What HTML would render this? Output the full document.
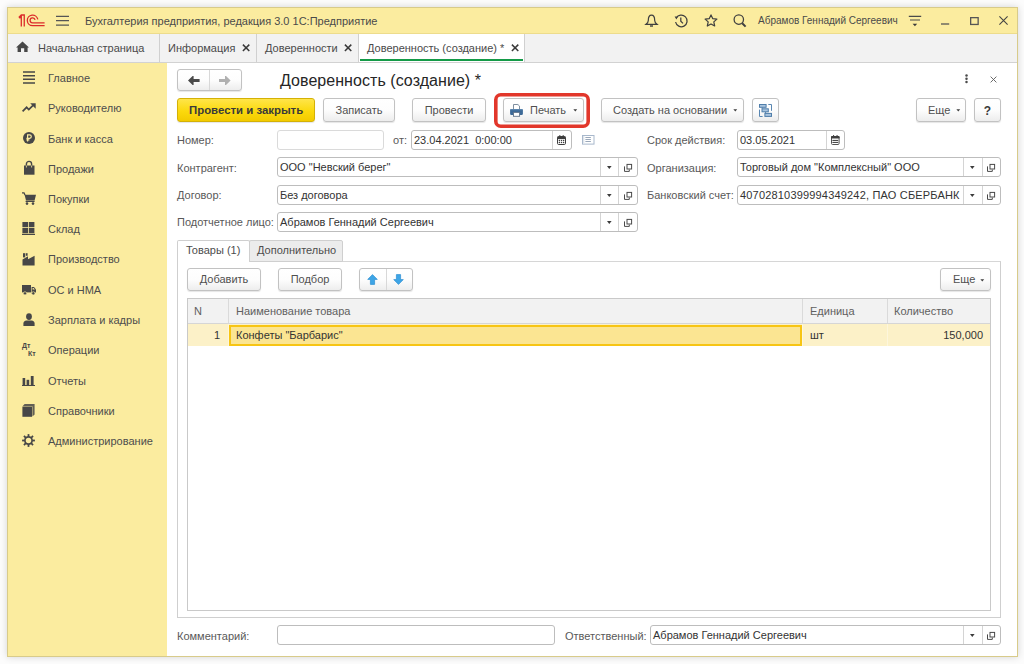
<!DOCTYPE html><html><head><meta charset="utf-8"><style>
*{box-sizing:border-box;margin:0;padding:0}
html,body{width:1024px;height:664px;overflow:hidden;background:#fcfcfc;font-family:"Liberation Sans",sans-serif;font-size:11px;color:#4d4d4d}
.a{position:absolute;white-space:nowrap}
.t{line-height:14px;height:14px}
svg{position:absolute;overflow:visible}
#win{position:absolute;left:7px;top:7px;width:1011px;height:650px;border:1px solid #d8cb8a;background:#fff;box-shadow:0 0 7px rgba(0,0,0,.16)}
#hdr{position:absolute;left:8px;top:8px;width:1009px;height:26px;background:#fbec9f;border-bottom:1px solid #eddc8c}
#tabs{position:absolute;left:8px;top:34px;width:1009px;height:29px;background:#f2f2f2;border-bottom:1px solid #d2d2d2}
#side{position:absolute;left:8px;top:63px;width:159px;height:593px;background:#fbec9f}
.btn{position:absolute;height:24px;border:1px solid #c2c2c2;border-radius:3px;background:linear-gradient(#ffffff,#fdfdfd 50%,#ededed);box-shadow:0 1px 1px rgba(0,0,0,.10);color:#505050;line-height:22px;white-space:nowrap}
.fld{position:absolute;height:20px;border:1px solid #bdbdbd;border-radius:3px;background:#fff;color:#333;line-height:18px;padding-left:2px;white-space:nowrap;overflow:hidden}
.dv{position:absolute;top:0;bottom:0;width:1px;background:#d4d4d4}
.tri{position:absolute;width:0;height:0;border-left:3px solid transparent;border-right:3px solid transparent;border-top:3px solid #444}
.lbl{color:#595959}
</style></head><body>
<div id="win"></div><div id="hdr"></div><div id="tabs"></div><div id="side"></div>
<svg style="left:18px;top:13px" width="28" height="15" viewBox="0 0 28 15">
<g fill="none" stroke="#dc2b2b" stroke-width="1.3" stroke-linejoin="miter">
<path d="M6.25 13.5 V2.0 H3.3 L1.2 4.1 L1.9 4.9 L3.3 3.7 V13.5"/>
<path d="M19.82 6.48 A5.3 5.3 0 1 0 14.6 12.7 H26.6"/>
<path d="M17.06 6.97 A2.5 2.5 0 1 0 14.6 9.9 H26.6"/>
</g></svg>
<svg style="left:56px;top:15px" width="13" height="11" viewBox="0 0 13 11"><g stroke="#555" stroke-width="1.3"><path d="M0 1.3H13M0 5.7H13M0 10.2H13"/></g></svg>
<div class="a t" style="left:85px;top:14px;color:#4a4a4a;">Бухгалтерия предприятия, редакция 3.0 1С:Предприятие</div>
<svg style="left:645px;top:14px" width="13" height="13" viewBox="0 0 13 13"><g fill="none" stroke="#3f3f3f" stroke-width="1.2">
<path d="M6.5 1.2 C3.8 1.2 3.3 4 3.3 6.5 C3.3 8.3 2.3 9.3 1 10.3 H12 C10.7 9.3 9.7 8.3 9.7 6.5 C9.7 4 9.2 1.2 6.5 1.2Z"/></g>
<rect x="5" y="11.3" width="3" height="1.4" fill="#3f3f3f"/></svg>
<svg style="left:674px;top:14px" width="14" height="14" viewBox="0 0 14 14"><g fill="none" stroke="#3f3f3f" stroke-width="1.25">
<path d="M2.2 4.2 A5.8 5.8 0 1 1 1.6 8"/><path d="M6.8 3.6 V7.2 L9 9.4"/></g>
<path d="M0.6 2.4 L3.8 2.6 L2.4 5.4Z" fill="#3f3f3f"/></svg>
<svg style="left:704px;top:14px" width="14" height="13" viewBox="0 0 14 13"><path fill="none" stroke="#3f3f3f" stroke-width="1.2" stroke-linejoin="round" d="M7 0.9 L8.8 4.7 L12.9 5.1 L9.8 7.9 L10.7 12 L7 9.9 L3.3 12 L4.2 7.9 L1.1 5.1 L5.2 4.7Z"/></svg>
<svg style="left:733px;top:14px" width="14" height="14" viewBox="0 0 14 14"><circle cx="5.8" cy="5.6" r="4.7" fill="none" stroke="#3f3f3f" stroke-width="1.25"/><path d="M9.2 9.2 L12.6 12.6" stroke="#3f3f3f" stroke-width="2"/></svg>
<div class="a t" style="left:758px;top:15px;color:#4a4a4a;font-size:10px;line-height:12px;height:auto;">Абрамов Геннадий Сергеевич</div>
<svg style="left:908px;top:15px" width="14" height="12" viewBox="0 0 14 12"><g stroke="#4a4a4a" stroke-width="1.2"><path d="M0.8 1.4H13.2M2 5H12"/></g><path d="M4.6 8.8H9.2L6.9 11.3Z" fill="#3a3a3a"/></svg>
<svg style="left:941px;top:23px" width="9" height="2" viewBox="0 0 9 2"><path d="M0 1H8.2" stroke="#555" stroke-width="1.3"/></svg>
<svg style="left:970px;top:17px" width="9" height="8" viewBox="0 0 9 8"><rect x="0.65" y="0.65" width="7.5" height="6.8" fill="none" stroke="#555" stroke-width="1.3"/></svg>
<svg style="left:999px;top:16px" width="9" height="9" viewBox="0 0 9 9"><path d="M0.4 0.4L8.6 8.6M8.6 0.4L0.4 8.6" stroke="#444" stroke-width="1.1"/></svg>
<svg style="left:16px;top:41px" width="14" height="11" viewBox="0 0 14 11"><path fill="#474747" d="M6.5 0.6 L13 6.6 H11.6 V11 H8.2 V7.2 H5 V11 H1.6 V6.6 H0 Z"/></svg>
<div class="a t" style="left:38px;top:41px;color:#4a4a4a;">Начальная страница</div>
<div class="a" style="left:159px;top:34px;width:1px;height:28px;background:#d0d0d0"></div>
<div class="a t" style="left:168px;top:41px;color:#4a4a4a;">Информация</div>
<svg style="left:242px;top:44px" width="8" height="8" viewBox="0 0 8 8"><path d="M0.9 0.6 L7.3 7 M7.3 0.6 L0.9 7" stroke="#3a3a3a" stroke-width="1.5"/></svg>
<div class="a" style="left:256px;top:34px;width:1px;height:28px;background:#d0d0d0"></div>
<div class="a t" style="left:265px;top:41px;color:#4a4a4a;">Доверенности</div>
<svg style="left:344px;top:44px" width="8" height="8" viewBox="0 0 8 8"><path d="M0.9 0.6 L7.3 7 M7.3 0.6 L0.9 7" stroke="#3a3a3a" stroke-width="1.5"/></svg>
<div class="a" style="left:358px;top:34px;width:167px;height:28px;background:#fff;border-left:1px solid #d0d0d0;border-right:1px solid #d0d0d0"></div>
<div class="a t" style="left:367px;top:41px;color:#4a4a4a;">Доверенность (создание) *</div>
<svg style="left:511px;top:44px" width="8" height="8" viewBox="0 0 8 8"><path d="M0.9 0.6 L7.3 7 M7.3 0.6 L0.9 7" stroke="#3a3a3a" stroke-width="1.5"/></svg>
<div class="a" style="left:360px;top:59px;width:163px;height:2px;background:#149a47"></div>
<div class="a t" style="left:48px;top:71px;color:#4d4d4d;">Главное</div>
<div class="a t" style="left:48px;top:101px;color:#4d4d4d;">Руководителю</div>
<div class="a t" style="left:48px;top:132px;color:#4d4d4d;">Банк и касса</div>
<div class="a t" style="left:48px;top:162px;color:#4d4d4d;">Продажи</div>
<div class="a t" style="left:48px;top:192px;color:#4d4d4d;">Покупки</div>
<div class="a t" style="left:48px;top:222px;color:#4d4d4d;">Склад</div>
<div class="a t" style="left:48px;top:252px;color:#4d4d4d;">Производство</div>
<div class="a t" style="left:48px;top:283px;color:#4d4d4d;">ОС и НМА</div>
<div class="a t" style="left:48px;top:313px;color:#4d4d4d;">Зарплата и кадры</div>
<div class="a t" style="left:48px;top:343px;color:#4d4d4d;">Операции</div>
<div class="a t" style="left:48px;top:374px;color:#4d4d4d;">Отчеты</div>
<div class="a t" style="left:48px;top:404px;color:#4d4d4d;">Справочники</div>
<div class="a t" style="left:48px;top:434px;color:#4d4d4d;">Администрирование</div>
<div class="btn" style="left:177px;top:69px;width:65px;height:22px"></div>
<div class="a" style="left:209px;top:70px;width:1px;height:20px;background:#d8d8d8"></div>
<svg style="left:188px;top:76px" width="12" height="9" viewBox="0 0 12 9"><path fill="#4a4a4a" d="M0 4.5 L4.6 0 H5.6 V3 H11.6 V6 H5.6 V9 H4.6Z"/></svg>
<svg style="left:219px;top:76px" width="12" height="9" viewBox="0 0 12 9"><path fill="#b0b0b0" d="M11.6 4.5 L7 0 H6 V3 H0 V6 H6 V9 H7Z"/></svg>
<div class="a t" style="left:280px;top:71px;color:#262626;font-size:16px;line-height:20px;height:auto;line-height:20px;letter-spacing:0.05px">Доверенность (создание) *</div>
<svg style="left:965px;top:74px" width="3" height="10" viewBox="0 0 3 10"><g fill="#4a4a4a"><circle cx="1.5" cy="1.4" r="1.25"/><circle cx="1.5" cy="4.7" r="1.25"/><circle cx="1.5" cy="8" r="1.25"/></g></svg>
<svg style="left:990px;top:76px" width="7" height="7" viewBox="0 0 7 7"><path d="M0.6 0.6L6.4 6.4M6.4 0.6L0.6 6.4" stroke="#5a5a5a" stroke-width="0.9"/></svg>
<div class="btn" style="left:177px;top:98px;width:138px;background:linear-gradient(#ffe54a,#fbd90d 55%,#f3cb00);border-color:#d4b106;color:#3a3a3a;font-weight:bold;font-size:11.4px;padding-left:11px">Провести и закрыть</div>
<div class="btn" style="left:323px;top:98px;width:72px;text-align:center">Записать</div>
<div class="btn" style="left:412px;top:98px;width:74px;text-align:center">Провести</div>
<svg style="left:494px;top:93px" width="96" height="35" viewBox="0 0 96 35"><rect x="1.8" y="1.8" width="92.4" height="31.4" rx="5" fill="none" stroke="#e2372b" stroke-width="3.6"/></svg>
<div class="btn" style="left:503px;top:98px;width:81px;padding-left:26px">Печать</div>
<svg style="left:510px;top:104px" width="13" height="13" viewBox="0 0 13 13">
<path fill="#fff" stroke="#6f8194" stroke-width="0.9" d="M3.5 5.2 V0.5 H7.9 L9.5 2.1 V5.2"/><path d="M7.9 0.5 V2.1 H9.5Z" fill="#b5c3d1"/>
<rect x="0.1" y="4.9" width="12.8" height="6" rx="1.2" fill="#3d6a98"/><rect x="0.6" y="5.2" width="11.8" height="1" fill="#5f8ab4"/>
<rect x="3.5" y="8.4" width="6.1" height="3.9" fill="#fff" stroke="#61748a" stroke-width="0.9"/></svg>
<svg style="left:573px;top:109px" width="5" height="3" viewBox="0 0 5 3"><path d="M0.4 0.2 H4.2 L2.3 2.5Z" fill="#3c3c3c"/></svg>
<div class="btn" style="left:601px;top:98px;width:143px;padding-left:11px">Создать на основании</div>
<svg style="left:733px;top:109px" width="5" height="3" viewBox="0 0 5 3"><path d="M0.4 0.2 H4.2 L2.3 2.5Z" fill="#3c3c3c"/></svg>
<div class="btn" style="left:752px;top:98px;width:27px"></div>
<svg style="left:759px;top:104px" width="13" height="13" viewBox="0 0 13 13">
<g fill="none" stroke="#5a87b2" stroke-width="1"><path d="M9.3 0.5 H12.5 V6.8 M0.5 5.6 V12.5 H3.6 M3.3 3.3 V4.8 M6.6 7.8 V9.4"/></g>
<g fill="#a9c4de" stroke="#4f7eaa" stroke-width="1"><rect x="0.5" y="0.5" width="6.6" height="2.8"/><rect x="3" y="4.8" width="6.3" height="3"/><rect x="5.9" y="9.4" width="6.6" height="3"/></g></svg>
<div class="btn" style="left:916px;top:98px;width:50px;padding-left:11px">Еще</div>
<svg style="left:956px;top:109px" width="5" height="3" viewBox="0 0 5 3"><path d="M0.4 0.2 H4.2 L2.3 2.5Z" fill="#3c3c3c"/></svg>
<div class="btn" style="left:974px;top:98px;width:27px;text-align:center;font-weight:bold;color:#3a3a3a;font-size:12px;line-height:24px">?</div>
<div class="a t" style="left:177px;top:133px;color:#595959;">Номер:</div>
<div class="fld" style="left:277px;top:130px;width:107px;border-color:#dadada"></div>
<div class="a t" style="left:393px;top:133px;color:#595959;">от:</div>
<div class="fld" style="left:411px;top:130px;width:161px;border-color:#bdbdbd">23.04.2021&nbsp; 0:00:00<div class="dv" style="left:140px"></div><svg style="left:145px;top:4px" width="9" height="10" viewBox="0 0 9 10"><rect x="0.5" y="1.5" width="8" height="8" rx="1.2" fill="#fff" stroke="#3e3e3e" stroke-width="1"/><rect x="0.5" y="1.5" width="8" height="2.6" fill="#3e3e3e"/><g fill="#3e3e3e"><rect x="2.2" y="0.2" width="1.2" height="2.2"/><rect x="5.6" y="0.2" width="1.2" height="2.2"/><circle cx="2.4" cy="5.6" r="0.75"/><circle cx="4.5" cy="5.6" r="0.75"/><circle cx="6.6" cy="5.6" r="0.75"/><circle cx="2.4" cy="7.6" r="0.75"/><circle cx="4.5" cy="7.6" r="0.75"/><circle cx="6.6" cy="7.6" r="0.75"/></g></svg></div>
<svg style="left:582px;top:135px" width="13" height="10" viewBox="0 0 13 10"><rect x="0.5" y="0.5" width="11.5" height="8.6" fill="#fff" stroke="#a8b8cc" stroke-width="1"/><rect x="1" y="1" width="1.4" height="7.6" fill="#dfe5ec"/><path d="M3.4 2.5H8.9M3.4 4.5H8.9M3.4 6.5H8.9" stroke="#8e9eb2" stroke-width="0.9"/></svg>
<div class="a t" style="left:647px;top:133px;color:#595959;">Срок действия:</div>
<div class="fld" style="left:737px;top:130px;width:108px;border-color:#bdbdbd">03.05.2021<div class="dv" style="left:88px"></div><svg style="left:93px;top:4px" width="9" height="10" viewBox="0 0 9 10"><rect x="0.5" y="1.5" width="7.6" height="8" rx="1.1" fill="#fff" stroke="#555" stroke-width="1"/><rect x="0" y="1" width="8.6" height="2.6" rx="0.8" fill="#3e3e3e"/><g fill="#3e3e3e"><rect x="2" y="0.1" width="1.1" height="2"/><rect x="5.5" y="0.1" width="1.1" height="2"/></g><g fill="#4a4a4a"><rect x="1.4" y="4.9" width="5.8" height="1.1"/><rect x="1.4" y="6.9" width="5.8" height="1.1"/></g></svg></div>
<div class="a t" style="left:177px;top:161px;color:#595959;">Контрагент:</div>
<div class="fld" style="left:277px;top:157px;width:361px;border-color:#bdbdbd">ООО "Невский берег"<div class="dv" style="left:340px"></div><svg style="left:346px;top:5px" width="10" height="10" viewBox="0 0 10 10"><g fill="none" stroke="#4a4a4a" stroke-width="1"><path d="M0.5 3.4 V8.4 H5.3 V6.6"/><rect x="3" y="1.4" width="4.6" height="4.6" fill="#fff"/></g></svg><div class="dv" style="left:322px"></div><svg style="left:329px;top:8px" width="5" height="3" viewBox="0 0 5 3"><path d="M0 0.1 H4.6 L2.3 2.9Z" fill="#3c3c3c"/></svg></div>
<div class="a t" style="left:647px;top:161px;color:#595959;">Организация:</div>
<div class="fld" style="left:737px;top:157px;width:264px;border-color:#bdbdbd">Торговый дом "Комплексный" ООО<div class="dv" style="left:244px"></div><svg style="left:249px;top:5px" width="10" height="10" viewBox="0 0 10 10"><g fill="none" stroke="#4a4a4a" stroke-width="1"><path d="M0.5 3.4 V8.4 H5.3 V6.6"/><rect x="3" y="1.4" width="4.6" height="4.6" fill="#fff"/></g></svg><div class="dv" style="left:225px"></div><svg style="left:232px;top:8px" width="5" height="3" viewBox="0 0 5 3"><path d="M0 0.1 H4.6 L2.3 2.9Z" fill="#3c3c3c"/></svg></div>
<div class="a t" style="left:177px;top:188px;color:#595959;">Договор:</div>
<div class="fld" style="left:277px;top:185px;width:361px;border-color:#bdbdbd">Без договора<div class="dv" style="left:340px"></div><svg style="left:346px;top:5px" width="10" height="10" viewBox="0 0 10 10"><g fill="none" stroke="#4a4a4a" stroke-width="1"><path d="M0.5 3.4 V8.4 H5.3 V6.6"/><rect x="3" y="1.4" width="4.6" height="4.6" fill="#fff"/></g></svg><div class="dv" style="left:322px"></div><svg style="left:329px;top:8px" width="5" height="3" viewBox="0 0 5 3"><path d="M0 0.1 H4.6 L2.3 2.9Z" fill="#3c3c3c"/></svg></div>
<div class="a t" style="left:647px;top:188px;color:#595959;">Банковский счет:</div>
<div class="fld" style="left:737px;top:185px;width:264px;border-color:#bdbdbd"><span style="letter-spacing:0.18px">40702810399994349242, ПАО СБЕРБАНК</span><div class="dv" style="left:244px"></div><svg style="left:249px;top:5px" width="10" height="10" viewBox="0 0 10 10"><g fill="none" stroke="#4a4a4a" stroke-width="1"><path d="M0.5 3.4 V8.4 H5.3 V6.6"/><rect x="3" y="1.4" width="4.6" height="4.6" fill="#fff"/></g></svg><div class="dv" style="left:225px"></div><svg style="left:232px;top:8px" width="5" height="3" viewBox="0 0 5 3"><path d="M0 0.1 H4.6 L2.3 2.9Z" fill="#3c3c3c"/></svg></div>
<div class="a t" style="left:177px;top:215px;color:#595959;">Подотчетное лицо:</div>
<div class="fld" style="left:277px;top:212px;width:361px;border-color:#bdbdbd">Абрамов Геннадий Сергеевич<div class="dv" style="left:340px"></div><svg style="left:346px;top:5px" width="10" height="10" viewBox="0 0 10 10"><g fill="none" stroke="#4a4a4a" stroke-width="1"><path d="M0.5 3.4 V8.4 H5.3 V6.6"/><rect x="3" y="1.4" width="4.6" height="4.6" fill="#fff"/></g></svg><div class="dv" style="left:322px"></div><svg style="left:329px;top:8px" width="5" height="3" viewBox="0 0 5 3"><path d="M0 0.1 H4.6 L2.3 2.9Z" fill="#3c3c3c"/></svg></div>
<div class="a" style="left:177px;top:261px;width:824px;height:357px;border:1px solid #cfcfcf;border-top-color:#d6d6d6"></div>
<div class="a" style="left:177px;top:240px;width:73px;height:22px;background:#fff;border:1px solid #cfcfcf;border-bottom:none;border-radius:2px 2px 0 0"></div>
<div class="a" style="left:249px;top:240px;width:94px;height:22px;background:#ececec;border:1px solid #cfcfcf;border-radius:2px 2px 0 0"></div>
<div class="a t" style="left:186px;top:243px;color:#4d4d4d;">Товары (1)</div>
<div class="a t" style="left:257px;top:243px;color:#4d4d4d;">Дополнительно</div>
<div class="btn" style="left:187px;top:268px;width:74px;height:23px;line-height:21px;text-align:center">Добавить</div>
<div class="btn" style="left:278px;top:268px;width:64px;height:23px;line-height:21px;text-align:center">Подбор</div>
<div class="btn" style="left:359px;top:268px;width:54px;height:23px"></div>
<div class="a" style="left:386px;top:269px;width:1px;height:21px;background:#d8d8d8"></div>
<svg style="left:367px;top:274px" width="11" height="11" viewBox="0 0 11 11"><path fill="#3ea5e6" stroke="#2d8fd2" stroke-width="0.7" stroke-linejoin="round" d="M5.5 0.6 L10.3 5.4 H7.6 V10.4 H3.4 V5.4 H0.7Z"/></svg>
<svg style="left:393px;top:274px" width="11" height="11" viewBox="0 0 11 11"><path fill="#3ea5e6" stroke="#2d8fd2" stroke-width="0.7" stroke-linejoin="round" d="M5.5 10.4 L10.3 5.6 H7.6 V0.6 H3.4 V5.6 H0.7Z"/></svg>
<div class="btn" style="left:940px;top:268px;width:51px;height:23px;line-height:21px;padding-left:12px">Еще</div>
<svg style="left:980px;top:279px" width="5" height="3" viewBox="0 0 5 3"><path d="M0.4 0.2 H4.2 L2.3 2.5Z" fill="#3c3c3c"/></svg>
<div class="a" style="left:187px;top:298px;width:804px;height:313px;border:1px solid #c9c9c9;background:#fff"></div>
<div class="a" style="left:188px;top:299px;width:802px;height:25px;background:#f2f2f2;border-bottom:1px solid #d6d6d6"></div>
<div class="a" style="left:188px;top:324px;width:802px;height:22px;background:#fcf1c8"></div>
<div class="a" style="left:228px;top:299px;width:1px;height:24px;background:#dadada"></div>
<div class="a" style="left:228px;top:324px;width:1px;height:22px;background:#fdf6dc"></div>
<div class="a" style="left:802px;top:299px;width:1px;height:24px;background:#dadada"></div>
<div class="a" style="left:802px;top:324px;width:1px;height:22px;background:#fdf6dc"></div>
<div class="a" style="left:887px;top:299px;width:1px;height:24px;background:#dadada"></div>
<div class="a" style="left:887px;top:324px;width:1px;height:22px;background:#fdf6dc"></div>
<div class="a" style="left:229px;top:325px;width:573px;height:21px;background:#fbe592;border:2px solid #f7c514"></div>
<div class="a t" style="left:194px;top:304px;color:#606060;">N</div>
<div class="a t" style="left:236px;top:304px;color:#606060;">Наименование товара</div>
<div class="a t" style="left:810px;top:304px;color:#606060;">Единица</div>
<div class="a t" style="left:894px;top:304px;color:#606060;">Количество</div>
<div class="a t" style="left:214px;top:328px;color:#333;">1</div>
<div class="a t" style="left:236px;top:328px;color:#333;">Конфеты "Барбарис"</div>
<div class="a t" style="left:810px;top:328px;color:#333;">шт</div>
<div class="a t" style="left:983px;top:328px;color:#333;transform:translateX(-100%)">150,000</div>
<div class="a t" style="left:177px;top:629px;color:#595959;">Комментарий:</div>
<div class="fld" style="left:277px;top:625px;width:278px;border-color:#bdbdbd"></div>
<div class="a t" style="left:565px;top:629px;color:#595959;">Ответственный:</div>
<div class="fld" style="left:650px;top:625px;width:351px;border-color:#bdbdbd">Абрамов Геннадий Сергеевич<div class="dv" style="left:331px"></div><svg style="left:336px;top:5px" width="10" height="10" viewBox="0 0 10 10"><g fill="none" stroke="#4a4a4a" stroke-width="1"><path d="M0.5 3.4 V8.4 H5.3 V6.6"/><rect x="3" y="1.4" width="4.6" height="4.6" fill="#fff"/></g></svg><div class="dv" style="left:312px"></div><svg style="left:319px;top:8px" width="5" height="3" viewBox="0 0 5 3"><path d="M0 0.1 H4.6 L2.3 2.9Z" fill="#3c3c3c"/></svg></div>
<svg style="left:23px;top:71px" width="12" height="13" viewBox="0 0 12 13"><g stroke="#474747" stroke-width="1.5"><path d="M0 1.1H12M0 4.7H12M0 8.3H12M0 11.9H12"/></g></svg>
<svg style="left:22px;top:103px" width="14" height="9" viewBox="0 0 14 9"><path d="M0.6 8.3 L4.6 4.3 L6.8 6.5 L11 2.3" fill="none" stroke="#474747" stroke-width="1.7"/><path d="M8.2 0.3 H13.7 V5.8Z" fill="#474747"/></svg>
<svg style="left:23px;top:132px" width="12" height="12" viewBox="0 0 12 12"><circle cx="6" cy="6" r="6" fill="#474747"/><g fill="none" stroke="#fbec9f" stroke-width="1.2"><path d="M4.6 9.6 V2.9 H6.6 A1.7 1.7 0 0 1 6.6 6.3 H3.4 M3.4 7.9 H6.4"/></g></svg>
<svg style="left:23px;top:161px" width="12" height="14" viewBox="0 0 12 14"><path d="M3.4 5 V3 A2.6 2.6 0 0 1 8.6 3 V5" fill="none" stroke="#474747" stroke-width="1.4"/><rect x="1" y="4.5" width="10.5" height="9.2" fill="#474747"/><path d="M3.4 4.5 V6.5 M8.6 4.5 V6.5" stroke="#fbec9f" stroke-width="0.8"/></svg>
<svg style="left:22px;top:192px" width="14" height="13" viewBox="0 0 14 13"><path d="M0 0.8 H2 L3 3" fill="none" stroke="#474747" stroke-width="1.3"/><path d="M2.6 2.8 H14 L12.6 8.6 H4Z" fill="#474747"/><rect x="3.6" y="8.8" width="9" height="1.2" fill="#474747"/><circle cx="5" cy="11.6" r="1.3" fill="#474747"/><circle cx="11" cy="11.6" r="1.3" fill="#474747"/></svg>
<svg style="left:22px;top:222px" width="13" height="13" viewBox="0 0 13 13"><g fill="#474747"><rect x="0.4" y="0" width="5.6" height="5.2"/><rect x="6.8" y="0" width="5.6" height="5.2"/><rect x="0.4" y="6" width="5.6" height="5.2"/><rect x="6.8" y="6" width="5.6" height="5.2"/><rect x="0" y="11.8" width="13" height="1.2"/></g></svg>
<svg style="left:22px;top:253px" width="13" height="13" viewBox="0 0 13 13"><path d="M0.5 12.6 V6.5 L6 3.2 V6.3 L12.6 2.8 V12.6Z" fill="#474747"/><rect x="1" y="0.2" width="2.2" height="4.2" fill="#474747"/><rect x="3.8" y="0.2" width="1.8" height="2.6" fill="#474747"/></svg>
<svg style="left:22px;top:285px" width="14" height="10" viewBox="0 0 14 10"><rect x="0" y="0" width="9" height="7.4" fill="#474747"/><path d="M9.6 2 H12 L14 4.6 V7.4 H9.6Z" fill="#474747"/><path d="M10.6 2.9 H11.6 L12.9 4.6 H10.6Z" fill="#fbec9f"/><circle cx="3" cy="8.3" r="1.6" fill="#474747" stroke="#fbec9f" stroke-width="0.6"/><circle cx="11.3" cy="8.3" r="1.6" fill="#474747" stroke="#fbec9f" stroke-width="0.6"/></svg>
<svg style="left:23px;top:313px" width="12" height="13" viewBox="0 0 12 13"><ellipse cx="6" cy="3.6" rx="2.9" ry="3.4" fill="#474747"/><path d="M0.4 13 V10.6 Q0.4 8 3.6 7.6 H8.4 Q11.6 8 11.6 10.6 V13Z" fill="#474747"/></svg>
<div class="a" style="left:22px;top:342px;font-size:7px;line-height:8px;font-weight:bold;color:#474747">Дт</div>
<div class="a" style="left:28px;top:350px;font-size:7px;line-height:8px;font-weight:bold;color:#474747">Кт</div>
<svg style="left:22px;top:376px" width="13" height="10" viewBox="0 0 13 10"><g fill="#474747"><rect x="0.6" y="2" width="2.6" height="7"/><rect x="4.6" y="3.8" width="2.6" height="5.2"/><rect x="8.8" y="0" width="2.8" height="9"/><rect x="0" y="9" width="13" height="1"/></g></svg>
<svg style="left:22px;top:404px" width="13" height="13" viewBox="0 0 13 13"><path d="M2.6 0 H12.6 V10.4 L10.4 12.6 V2.2 H0.6Z" fill="#474747" opacity="0.85"/><rect x="0.4" y="2.6" width="9.6" height="10.2" fill="#474747"/></svg>
<svg style="left:22px;top:434px" width="13" height="13" viewBox="-6.5 -6.5 13 13"><g fill="#474747"><rect x="-0.9" y="-6.4" width="1.8" height="2.6" transform="rotate(0)"/><rect x="-0.9" y="-6.4" width="1.8" height="2.6" transform="rotate(45)"/><rect x="-0.9" y="-6.4" width="1.8" height="2.6" transform="rotate(90)"/><rect x="-0.9" y="-6.4" width="1.8" height="2.6" transform="rotate(135)"/><rect x="-0.9" y="-6.4" width="1.8" height="2.6" transform="rotate(180)"/><rect x="-0.9" y="-6.4" width="1.8" height="2.6" transform="rotate(225)"/><rect x="-0.9" y="-6.4" width="1.8" height="2.6" transform="rotate(270)"/><rect x="-0.9" y="-6.4" width="1.8" height="2.6" transform="rotate(315)"/></g><circle cx="0" cy="0" r="3.6" fill="none" stroke="#474747" stroke-width="1.7"/></svg>
</body></html>
